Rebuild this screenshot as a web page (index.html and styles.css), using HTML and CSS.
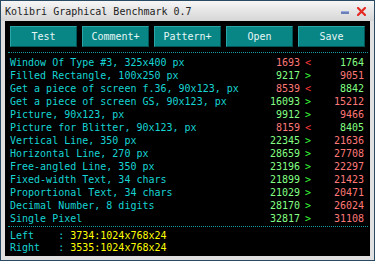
FILE: index.html
```html
<!DOCTYPE html>
<html>
<head>
<meta charset="utf-8">
<link rel="stylesheet" href="styles.css">
</head>
<body>
<div class="window">
  <div class="titlebar">
    <span class="title">Kolibri Graphical Benchmark 0.7</span>
    <svg class="min" width="8" height="3" viewBox="0 0 8 3"><rect x="0" y="0" width="8" height="3" fill="#6a7fb8"/><rect x="0" y="0" width="8" height="1" fill="#9aaad8"/></svg>
    <svg class="close" width="9" height="9" viewBox="0 0 9 9"><path d="M1 1 L8 8 M8 1 L1 8" stroke="#e42a22" stroke-width="2.2" stroke-linecap="square"/></svg>
  </div>
  <div class="content">
    <div class="buttons">
      <div class="btn">Test</div>
      <div class="btn">Comment+</div>
      <div class="btn">Pattern+</div>
      <div class="btn">Open</div>
      <div class="btn">Save</div>
    </div>
    <div class="sep top"></div>
    <div class="rows">
      <span class="lbl">Window Of Type #3, 325x400 px</span><span class="n lo">1693</span><span class="s lt">&lt;</span><span class="n hi">1764</span>
      <span class="lbl">Filled Rectangle, 100x250 px</span><span class="n hi">9217</span><span class="s gt">&gt;</span><span class="n lo">9051</span>
      <span class="lbl">Get a piece of screen f.36, 90x123, px</span><span class="n lo">8539</span><span class="s lt">&lt;</span><span class="n hi">8842</span>
      <span class="lbl">Get a piece of screen GS, 90x123, px</span><span class="n hi">16093</span><span class="s gt">&gt;</span><span class="n lo">15212</span>
      <span class="lbl">Picture, 90x123, px</span><span class="n hi">9912</span><span class="s gt">&gt;</span><span class="n lo">9466</span>
      <span class="lbl">Picture for Blitter, 90x123, px</span><span class="n lo">8159</span><span class="s lt">&lt;</span><span class="n hi">8405</span>
      <span class="lbl">Vertical Line, 350 px</span><span class="n hi">22345</span><span class="s gt">&gt;</span><span class="n lo">21636</span>
      <span class="lbl">Horizontal Line, 270 px</span><span class="n hi">28659</span><span class="s gt">&gt;</span><span class="n lo">27708</span>
      <span class="lbl">Free-angled Line, 350 px</span><span class="n hi">23196</span><span class="s gt">&gt;</span><span class="n lo">22297</span>
      <span class="lbl">Fixed-width Text, 34 chars</span><span class="n hi">21899</span><span class="s gt">&gt;</span><span class="n lo">21423</span>
      <span class="lbl">Proportional Text, 34 chars</span><span class="n hi">21029</span><span class="s gt">&gt;</span><span class="n lo">20471</span>
      <span class="lbl">Decimal Number, 8 digits</span><span class="n hi">28170</span><span class="s gt">&gt;</span><span class="n lo">26024</span>
      <span class="lbl">Single Pixel</span><span class="n hi">32817</span><span class="s gt">&gt;</span><span class="n lo">31108</span>
    </div>
    <div class="sep bottom"></div>
    <div class="info">
      <div class="line"><span class="lbl">Left    :</span><span class="val"> 3734:1024x768x24</span></div>
      <div class="line"><span class="lbl">Right   :</span><span class="val"> 3535:1024x768x24</span></div>
    </div>
  </div>
</div>
</body>
</html>
```
FILE: styles.css
```css
* { box-sizing: border-box; }
html, body { margin: 0; padding: 0; background: #e2e2e2; }
body {
  font-family: "DejaVu Sans Mono", "Liberation Mono", monospace;
  font-size: 10px;
}
.window {
  width: 375px;
  height: 261px;
  border: 1px solid #2a4a62;
  background: #e0e0e0;
  display: flex;
  flex-direction: column;
}
.titlebar {
  height: 20px;
  flex: none;
  display: flex;
  align-items: center;
  padding: 1px 8px 0 4px;
  background: linear-gradient(#f6f6f6, #e4e4e4 55%, #d6d6d6);
  color: #222;
}
.title { flex: 1; white-space: pre; }
.min { display: block; margin-top: 1px; }
.close { display: block; margin-left: 8px; margin-top: -1px; }
.content {
  height: 235px;
  flex: none;
  margin: 0 4px;
  background: #000;
  padding: 5px;
}
.buttons {
  display: flex;
  gap: 5px;
}
.btn {
  width: 67px;
  height: 21px;
  background: #088585;
  border: 1px solid;
  border-color: #2aa6a6 #035656 #035656 #2aa6a6;
  color: #e6f6f6;
  display: flex;
  align-items: center;
  justify-content: center;
  padding-bottom: 1px;
}
.sep {
  height: 0;
  border-top: 1px dotted #109c9c;
  margin-left: -2px;
  margin-right: -3px;
}
.sep.top { margin-top: 5px; margin-bottom: 3px; }
.sep.bottom { margin-top: 1px; margin-bottom: 3px; }
.rows {
  display: grid;
  grid-template-columns: 1fr 40px 11px 53px;
  padding-right: 1px;
  line-height: 13px;
}
.lbl { color: #16d4d4; white-space: pre; }
.n { text-align: right; }
.n.hi { color: #84ff84; }
.n.lo { color: #ff7878; }
.s { padding-left: 5px; }
.s.lt { color: #ff3a3a; }
.s.gt { color: #3aff3a; }
.info { line-height: 12px; }
.line { white-space: pre; }
.val { color: #ffff00; }
```
